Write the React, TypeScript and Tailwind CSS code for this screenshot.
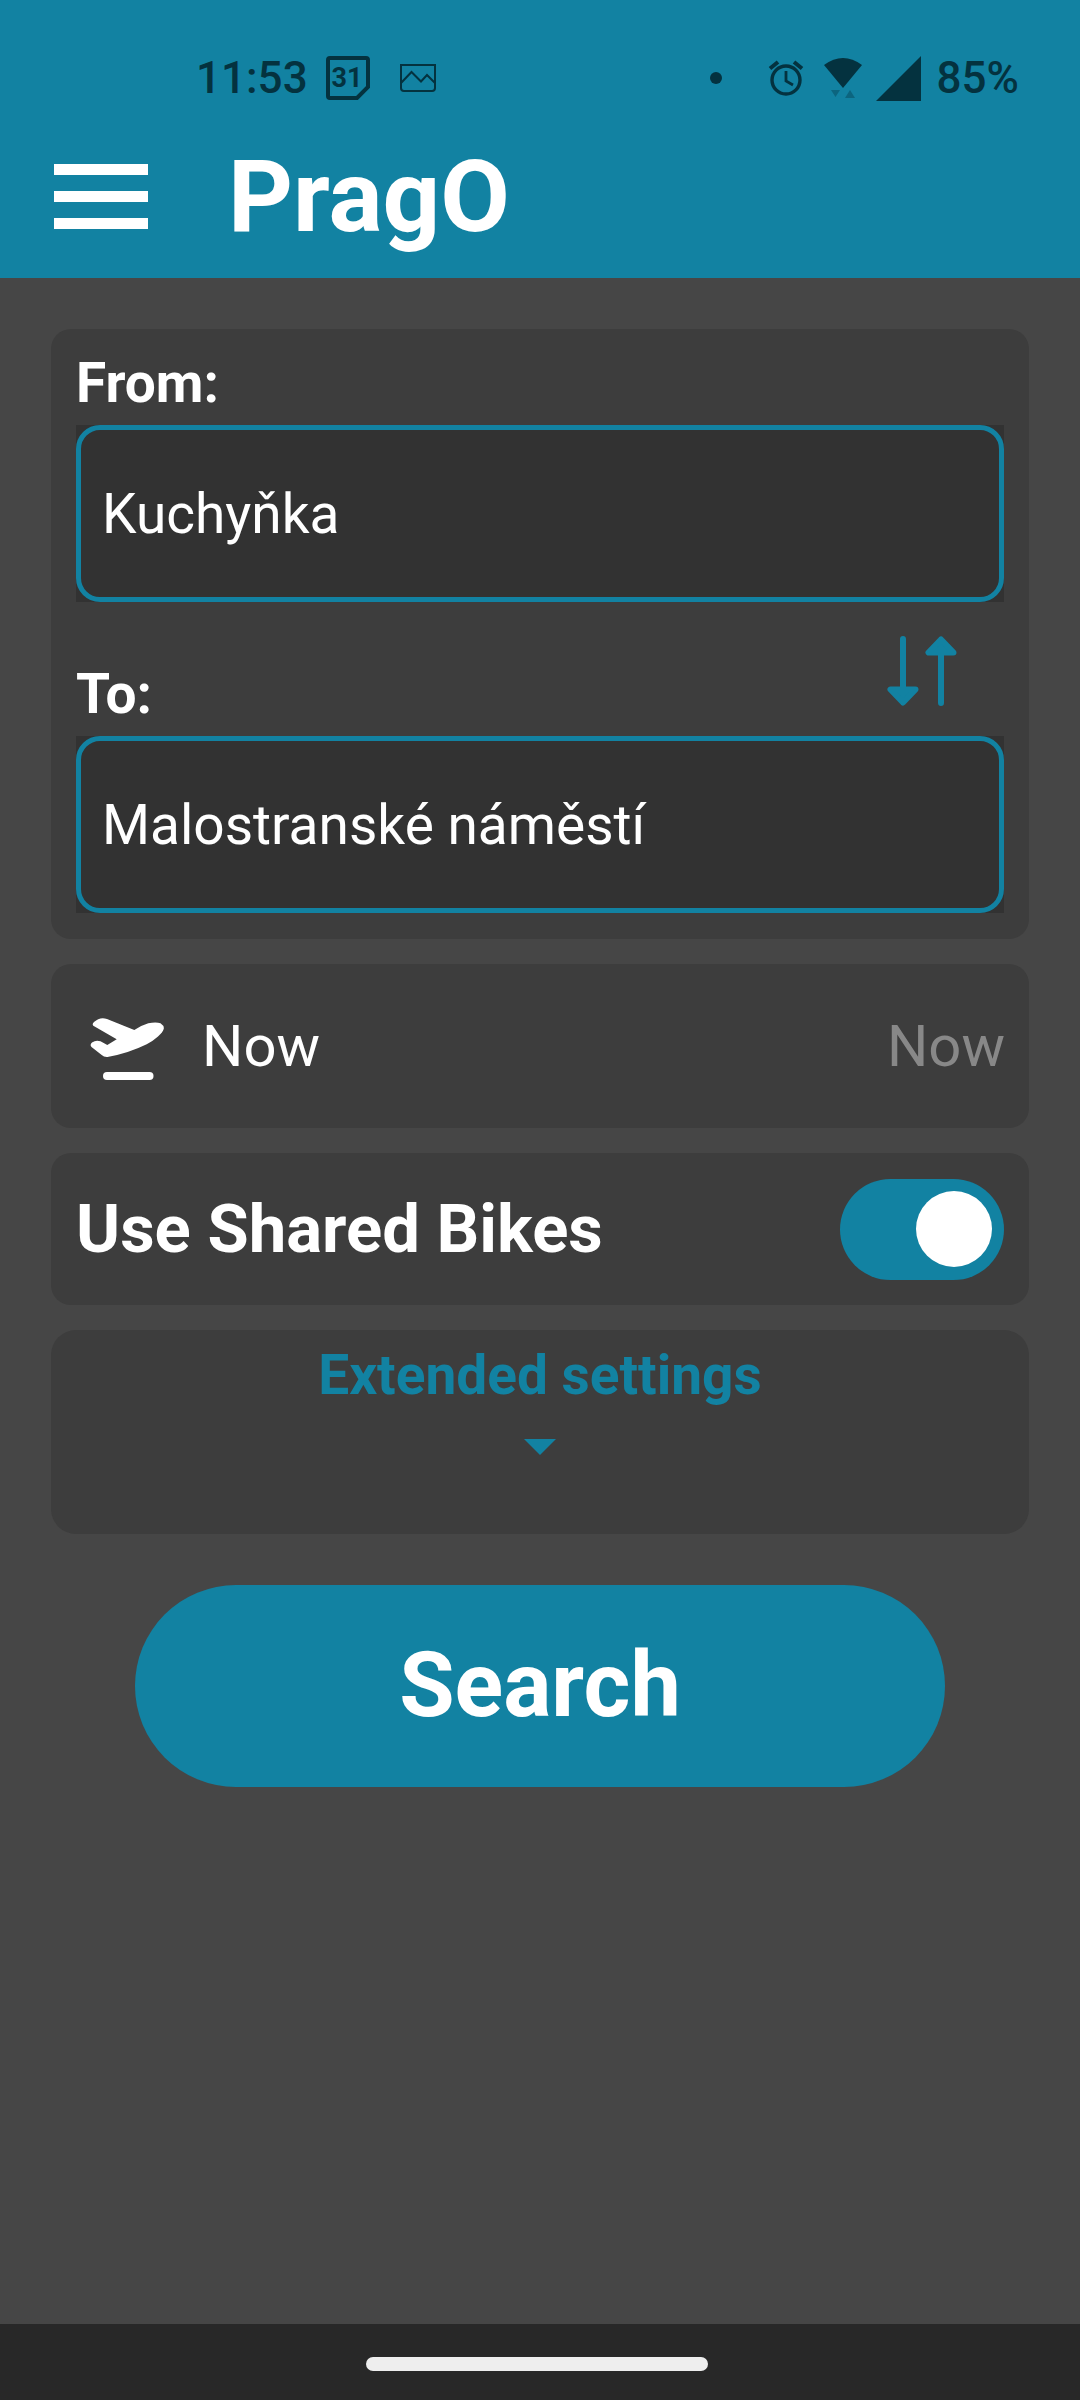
import { useState } from "react";

function CalendarIcon() {
  return (
    <svg className="h-[44px] w-[44px]" viewBox="0 0 44 44" fill="none" aria-hidden="true">
      <path d="M4 2H40Q42 2 42 4V31L31 42H4Q2 42 2 40V4Q2 2 4 2Z" stroke="currentColor" strokeWidth="4" />
      <text x="21" y="31" textAnchor="middle" fontFamily="Roboto, sans-serif" fontSize="27" fontWeight="700" fill="currentColor">
        31
      </text>
    </svg>
  );
}

function PictureIcon() {
  return (
    <svg className="h-[28px] w-[36px]" viewBox="0 0 36 28" fill="none" stroke="currentColor" strokeWidth="2" aria-hidden="true">
      <path d="M1 1H35V24Q35 27 32 27H4Q1 27 1 24Z" />
      <path d="M1 19L11.500 8L21 17.500L27 11L35 19" />
    </svg>
  );
}

function AlarmIcon() {
  return (
    <svg className="h-[36px] w-[36px]" viewBox="0 0 36 36" fill="none" stroke="currentColor" aria-hidden="true">
      <circle cx="18" cy="20" r="14" strokeWidth="3.400" />
      <path d="M18 11V21L25 25" strokeWidth="2.800" />
      <path d="M2 8.500L10 2M34 8.500L26 2" strokeWidth="4" />
    </svg>
  );
}

function WifiIcon() {
  return (
    <svg className="h-[44px] w-[38px]" viewBox="0 0 38 44" fill="currentColor" aria-hidden="true">
      <path d="M0 9Q19 -5 38 9L19 32Z" />
      <path d="M7 34H16L11.500 41ZM21 42L26 34L31 42Z" opacity="0.350" />
    </svg>
  );
}

function SignalIcon() {
  return (
    <svg className="h-[45px] w-[45px]" viewBox="0 0 45 45" fill="currentColor" aria-hidden="true">
      <path d="M45 0V45H0Z" />
    </svg>
  );
}

function SwapIcon() {
  return (
    <svg className="h-[72px] w-[70px]" viewBox="0 0 70 72" fill="currentColor" stroke="currentColor" strokeLinecap="round" strokeLinejoin="round" strokeWidth="6" aria-hidden="true">
      <path d="M16 4V60M54 68V12" />
      <path d="M3.500 54.500H28.500L16 67.500ZM41.500 17.500H66.500L54 4.500Z" />
    </svg>
  );
}

function TakeoffIcon() {
  return (
    <svg className="h-[72px] w-[76px]" viewBox="0 -8 76 72" fill="currentColor" aria-hidden="true">
      <path d="M3.300 7.700Q1.800 6 4 4Q10 -1.500 17 1L44.300 12Q51 7.500 58.300 5.300Q66 3.500 70.500 5.300Q74.500 8 73.700 11Q73 14 68 18.500Q63 23 56.700 26.300Q38 35.500 17.500 39Q14 39.300 11.700 37L1.500 29Q-0.500 26.500 2 24.500Q6 21.500 10.500 23.300L17.300 27L26.700 21.300Z" />
      <rect x="13" y="54" width="50.500" height="8" rx="4" />
    </svg>
  );
}

function StatusBar() {
  return (
    <div className="flex h-[52px] items-center justify-between pr-[61px] pl-[196px] text-[44px] leading-[52px] font-medium text-[#04323f]">
      <div className="flex items-center">
        <span>11:53</span>
        <span className="ml-[18px]"><CalendarIcon /></span>
        <span className="ml-[30px]"><PictureIcon /></span>
      </div>
      <div className="flex items-center">
        <span className="h-3 w-3 rounded-full bg-current" />
        <span className="ml-[46px]"><AlarmIcon /></span>
        <span className="ml-5"><WifiIcon /></span>
        <span className="ml-[14px]"><SignalIcon /></span>
        <span className="ml-4">85%</span>
      </div>
    </div>
  );
}

function Field({ id, label, value, onChange }: { id: string; label: string; value: string; onChange: (v: string) => void }) {
  return (
    <div>
      <label htmlFor={id} className="block pb-[10px] text-[55px] leading-[64px] font-bold">
        {label}
      </label>
      <div className="bg-[#323232]">
        <input
          id={id}
          type="text"
          value={value}
          onChange={(e) => onChange(e.target.value)}
          className="block h-[177px] w-full rounded-3xl border-[5px] border-[#1282a2] bg-transparent px-[21px] text-[55px] text-white outline-none"
        />
      </div>
    </div>
  );
}

export default function App() {
  const [from, setFrom] = useState("Kuchyňka");
  const [to, setTo] = useState("Malostranské náměstí");
  const [bikes, setBikes] = useState(true);

  const swap = () => {
    setFrom(to);
    setTo(from);
  };

  return (
    <div className="flex min-h-screen flex-col bg-[#464646] font-[Roboto,sans-serif] text-white">
      <header className="bg-[#1282a2] pt-[52px]">
        <StatusBar />
        <div className="flex h-[174px] items-center pt-[11px] pl-[54px]">
          <button type="button" aria-label="Open menu" className="flex w-[94px] flex-col gap-4">
            <span className="h-[11px] bg-white" />
            <span className="h-[11px] bg-white" />
            <span className="h-[11px] bg-white" />
          </button>
          <h1 className="pl-20 text-[101px] leading-[116px] font-bold">PragO</h1>
        </div>
      </header>

      <main className="flex flex-1 flex-col gap-[25px] px-[51px] pt-[51px]">
        <section className="relative flex flex-col gap-[60px] rounded-[20px] bg-[#3d3d3d] px-[25px] pt-[22px] pb-[26px]">
          <Field id="from" label="From:" value={from} onChange={setFrom} />
          <button type="button" aria-label="Swap start and destination" onClick={swap} className="absolute top-[306px] right-[72px] text-[#1282a2]">
            <SwapIcon />
          </button>
          <Field id="to" label="To:" value={to} onChange={setTo} />
        </section>

        <button type="button" className="flex h-[164px] items-center rounded-[20px] bg-[#3d3d3d] pr-6 pl-[39px] text-[58px] leading-[68px]">
          <TakeoffIcon />
          <span className="ml-9 flex-1 text-left">Now</span>
          <span className="text-[#888888]">Now</span>
        </button>

        <section className="flex h-[152px] items-center justify-between rounded-[20px] bg-[#3d3d3d] px-[25px]">
          <label htmlFor="bikes" className="text-[67px] leading-[78px] font-bold">
            Use Shared Bikes
          </label>
          <input
            id="bikes"
            type="checkbox"
            role="switch"
            checked={bikes}
            onChange={(e) => setBikes(e.target.checked)}
            className="flex h-[101px] w-[164px] appearance-none items-center rounded-full bg-[#767676] px-3 before:h-[76px] before:w-[76px] before:rounded-full before:bg-white checked:justify-end checked:bg-[#1282a2]"
          />
        </section>

        <button type="button" aria-expanded="false" className="flex h-[204px] flex-col items-center rounded-[25px] bg-[#3d3d3d] pt-[13px] text-[55px] leading-[64px] font-bold text-[#1282a2]">
          Extended settings
          <svg className="mt-8 h-4 w-8" viewBox="0 0 32 16" fill="currentColor" aria-hidden="true">
            <path d="M0 0H32L16 16Z" />
          </svg>
        </button>

        <button type="button" className="mt-[26px] h-[202px] w-[810px] max-w-full self-center rounded-full bg-[#1282a2] text-[90px] leading-[104px] font-bold">
          Search
        </button>
      </main>

      <footer className="flex h-[76px] items-center justify-center bg-[#282828] pt-1 pr-[6px]">
        <div className="h-[14px] w-[342px] rounded-full bg-[#eeeeee]" />
      </footer>
    </div>
  );
}
